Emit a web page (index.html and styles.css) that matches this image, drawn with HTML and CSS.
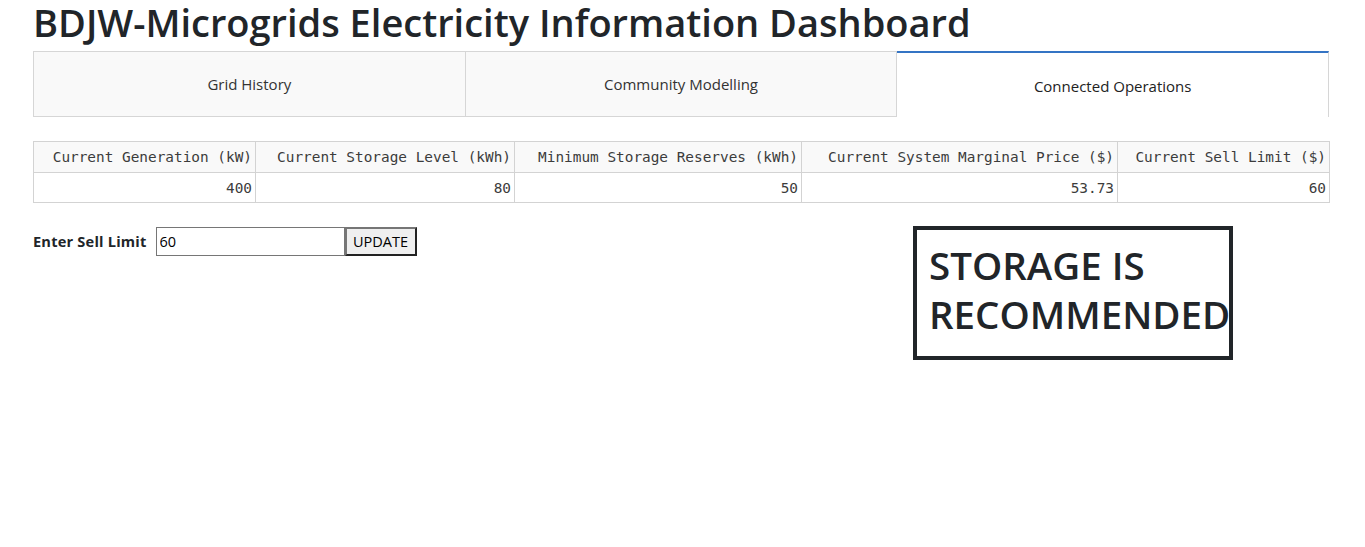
FILE: index.html
```html
<!DOCTYPE html>
<html lang="en">
<head>
<meta charset="utf-8">
<title>BDJW-Microgrids Electricity Information Dashboard</title>
<link rel="stylesheet" href="styles.css">
</head>
<body>
<div class="page">
  <h1 class="title">BDJW-Microgrids Electricity Information Dashboard</h1>
  <div class="tabs">
    <div class="tab">Grid History</div>
    <div class="tab">Community Modelling</div>
    <div class="tab tab--selected">Connected Operations</div>
  </div>

  <table class="data-table">
    <colgroup>
      <col class="c1"><col class="c2"><col class="c3"><col class="c4"><col class="c5">
    </colgroup>
    <thead>
      <tr>
        <th>Current Generation (kW)</th>
        <th>Current Storage Level (kWh)</th>
        <th>Minimum Storage Reserves (kWh)</th>
        <th>Current System Marginal Price ($)</th>
        <th>Current Sell Limit ($)</th>
      </tr>
    </thead>
    <tbody>
      <tr>
        <td>400</td>
        <td>80</td>
        <td>50</td>
        <td>53.73</td>
        <td>60</td>
      </tr>
    </tbody>
  </table>

  <div class="controls">
    <div class="sell-form">
      <label class="sell-label" for="sell">Enter Sell Limit</label>
      <input class="sell-input" id="sell" type="text" value="60">
      <button class="sell-btn" type="button">UPDATE</button>
    </div>
    <div class="recommend">STORAGE IS RECOMMENDED</div>
  </div>
</div>
</body>
</html>
```
FILE: styles.css
```css
html, body {
  margin: 0;
  padding: 0;
  background: #fff;
}
body {
  font-family: "Open Sans", "Noto Sans", sans-serif;
  color: #212529;
}
.page {
  width: 1296px;
  padding-left: 33px;
}
.title {
  margin: 0 0 7px 0;
  font-size: 38px;
  font-weight: 600;
  line-height: 44px;
  letter-spacing: 0;
  color: #212529;
}
.tabs {
  display: flex;
  height: 66px;
}
.tab {
  flex: 1 1 0;
  display: flex;
  align-items: center;
  justify-content: center;
  background: #f9f9f9;
  border: 1px solid #d6d6d6;
  border-left: none;
  font-size: 15px;
  color: #333;
  box-sizing: border-box;
}
.tab:first-child {
  border-left: 1px solid #d6d6d6;
}
.tab--selected {
  background: #fff;
  border-top: 2px solid #3474c4;
  border-bottom: none;
  border-left: none;
  padding-top: 2px;
  color: #222;
}
.data-table {
  margin-top: 24px;
  width: 1296px;
  border-collapse: collapse;
  table-layout: fixed;
  font-family: "DejaVu Sans Mono", "Liberation Mono", monospace;
  font-size: 14.4px;
  color: #3c3c3c;
}
.c1 { width: 222px; }
.c2 { width: 259px; }
.c3 { width: 287px; }
.c4 { width: 316px; }
.c5 { width: 212px; }
.data-table th,
.data-table td {
  border: 1px solid #d3d3d3;
  text-align: right;
  padding: 0 3px;
  white-space: nowrap;
  overflow: hidden;
  font-weight: normal;
}
.data-table th {
  background: #f9f9f9;
  height: 30px;
}
.data-table td {
  height: 29px;
}
.controls {
  display: flex;
  justify-content: space-between;
  margin-top: 23px;
  padding-right: 96px;
}
.sell-form {
  display: flex;
  align-items: center;
  height: 30px;
  margin-top: 0;
}
.sell-label {
  font-weight: 700;
  font-size: 14.6px;
  letter-spacing: 0.2px;
  margin-right: 9px;
  color: #212529;
}
.sell-input {
  width: 189px;
  height: 29px;
  box-sizing: border-box;
  border: 1px solid #767676;
  padding: 1px 3px;
  font-family: "Open Sans", "Noto Sans", sans-serif;
  font-size: 14.5px;
  color: #000;
  margin: 0;
}
.sell-btn {
  height: 29px;
  box-sizing: border-box;
  width: 72px;
  border-width: 2px;
  border-style: solid;
  border-color: #767676 #222 #222 #767676;
  background: #efefef;
  font-family: "Open Sans", "Noto Sans", sans-serif;
  font-size: 14.5px;
  color: #000;
  padding: 0 4px;
  margin: 0;
}
.recommend {
  width: 320px;
  height: 134px;
  box-sizing: border-box;
  border: 4px solid #212529;
  padding: 11px 12px 0 12px;
  font-size: 38.5px;
  font-weight: 600;
  line-height: 49px;
  color: #212529;
  letter-spacing: 0;
  white-space: normal;
  overflow: visible;
}
```
